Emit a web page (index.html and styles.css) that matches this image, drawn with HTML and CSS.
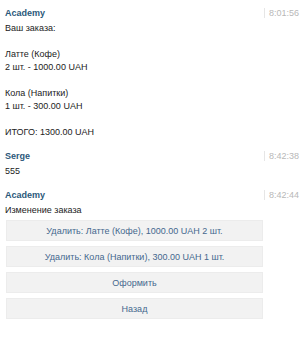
FILE: index.html
```html
<!doctype html>
<html lang="ru">
<head>
	<meta charset="UTF-8">
	<title>Academy</title>
	<link rel="stylesheet" href="styles.css">
</head>
<body>
	<div class="chat">
		<div class="msg">
			<div class="head"><span class="name">Academy</span><span class="time">8:01:56</span></div>
			<div class="text">Ваш заказа:<br><br>Латте (Кофе)<br>2 шт. - 1000.00 UAH<br><br>Кола (Напитки)<br>1 шт. - 300.00 UAH<br><br>ИТОГО: 1300.00 UAH</div>
		</div>
		<div class="msg">
			<div class="head"><span class="name">Serge</span><span class="time">8:42:38</span></div>
			<div class="text">555</div>
		</div>
		<div class="msg">
			<div class="head"><span class="name">Academy</span><span class="time">8:42:44</span></div>
			<div class="text">Изменение заказа</div>
			<ul class="keys">
				<li>Удалить: Латте (Кофе), 1000.00 UAH 2 шт.</li>
				<li>Удалить: Кола (Напитки), 300.00 UAH 1 шт.</li>
				<li>Оформить</li>
				<li>Назад</li>
			</ul>
		</div>
	</div>
</body>
</html>
```

FILE: styles.css
```css
*{margin:0;padding:0;}
li{list-style:none;}
body{
	font-family:"Liberation Sans",Arial,sans-serif;
	font-size:9px;
	color:#222;
	background:#fff;
	overflow:hidden;
}
.chat{
	padding:6px 0 0 5px;
}
.msg{
	margin-bottom:10px;
}
.head{
	display:flex;
	justify-content:space-between;
	align-items:center;
	height:14px;
}
.name{
	color:#2b587a;
	font-weight:bold;
}
.time{
	color:#b8b8b8;
	font-size:9px;
	padding-left:4px;
	border-left:1px solid #e6e6e6;
	margin-right:1px;
}
.text{
	line-height:13px;
	margin-top:2px;
}
.keys{
	margin-top:3px;
	width:257px;
	margin-left:1px;
}
.keys li{
	height:21px;
	line-height:21px;
	margin-bottom:5px;
	text-align:center;
	color:#45688e;
	background-color:#f2f2f2;
	border:1px solid #ececec;
	box-sizing:border-box;
}
```
